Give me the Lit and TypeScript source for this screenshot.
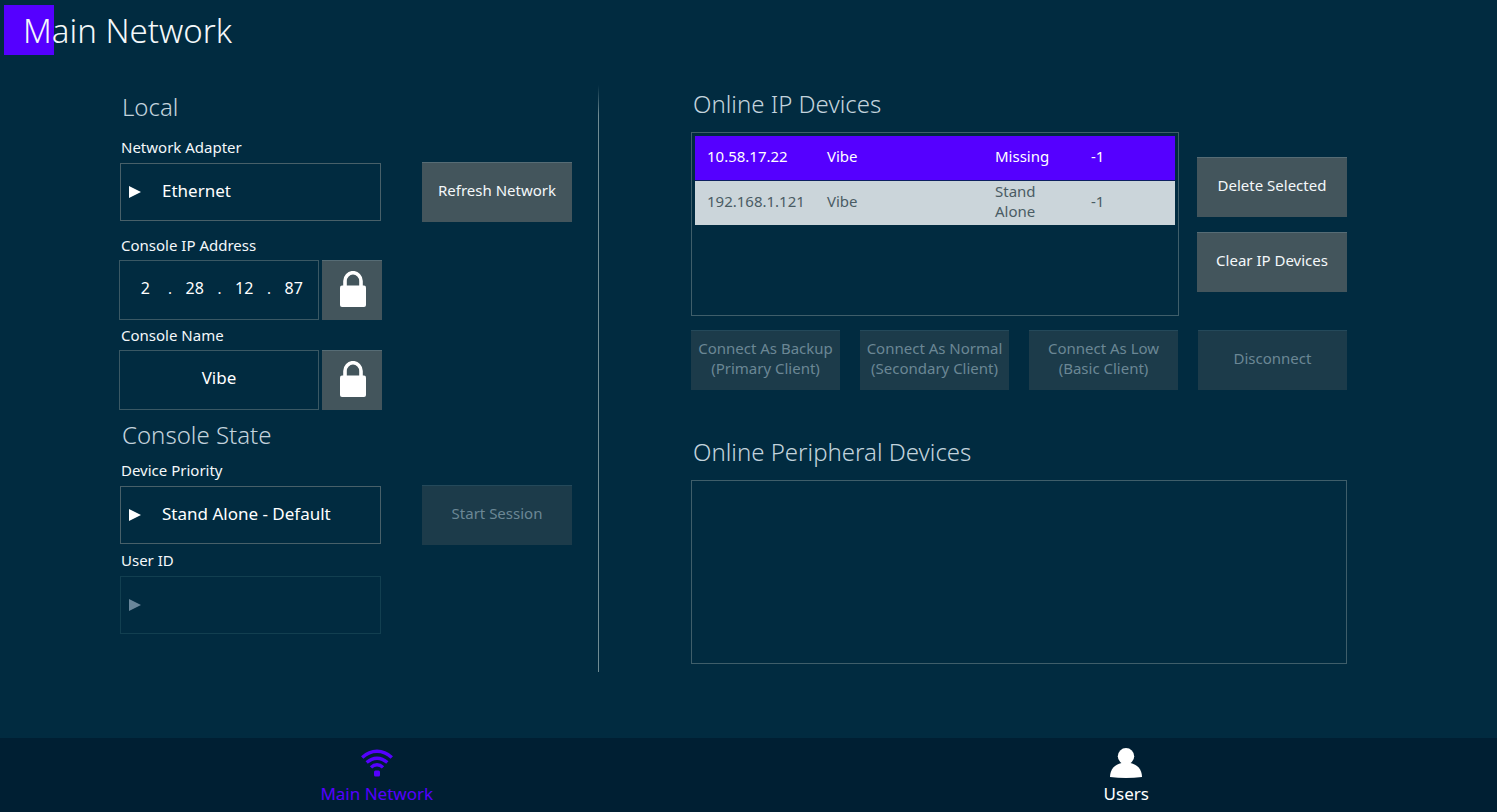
import { LitElement, html, css, svg } from "lit";
import { customElement, property, state } from "lit/decorators.js";
import { classMap } from "lit/directives/class-map.js";

interface Device {
  ip: string;
  name: string;
  status: string;
  id: string;
}

const lockIcon = html`<svg class="lock" viewBox="0 0 26 36" aria-hidden="true">
  <path d="M5 16V10a8 8.300 0 0 1 16 0V16" fill="none" stroke="currentColor" stroke-width="3.6" />
  <rect x="0" y="14.5" width="26" height="21.5" rx="2" fill="currentColor" />
</svg>`;

const wifiIcon = svg`<svg class="nav-icon" viewBox="0 0 32 30" aria-hidden="true">
  <g fill="none" stroke="currentColor" stroke-width="3.4">
    <path d="M1.2 9.4Q8 3.2 16 3.2T30.800 9.400" />
    <path d="M5.700 14.600Q10.500 10.200 16 10.200T26.300 14.600" />
    <path d="M10 19.400Q12.800 16.700 16 16.700T22 19.400" />
  </g>
  <rect x="13" y="22.500" width="6" height="6" rx="1.500" fill="currentColor" />
</svg>`;

const userIcon = svg`<svg class="nav-icon" viewBox="0 0 32 30" aria-hidden="true">
  <circle cx="16" cy="8.200" r="8.200" fill="currentColor" />
  <path d="M0 29C0 21 5 16.500 11.500 15H20.500C27 16.500 32 21 32 29Q16 30.800 0 29Z" fill="currentColor" />
</svg>`;

@customElement("arrow-select")
class ArrowSelect extends LitElement {
  @property() label = "";
  @property() value = "";
  @property({ type: Boolean }) disabled = false;

  static styles = css`
    :host {
      display: block;
    }
    .label {
      display: block;
      height: 26px;
      line-height: 23px;
      padding-left: 1px;
    }
    .box {
      display: grid;
      align-items: center;
      height: 58px;
      margin: 1px 1px 1px 0;
    }
    .control,
    .arrow {
      grid-area: 1 / 1;
    }
    .control {
      box-sizing: border-box;
      width: 100%;
      height: 100%;
      appearance: none;
      border: 1px solid #486069;
      border-radius: 0;
      background: transparent;
      color: #fff;
      font: inherit;
      font-size: 17px;
      padding: 0 8px 2px 41px;
      opacity: 1;
    }
    .arrow {
      width: 12px;
      height: 12px;
      margin-left: 9px;
      pointer-events: none;
      fill: #fff;
    }
    .control:disabled {
      border-color: #123f50;
    }
    .control:disabled + .arrow {
      fill: #69869a;
    }
    option {
      color: #012b40;
    }
  `;

  render() {
    return html`
      <label class="label" for="control">${this.label}</label>
      <div class="box">
        <select class="control" id="control" ?disabled=${this.disabled}>
          <option>${this.value}</option>
        </select>
        <svg class="arrow" viewBox="0 0 12 12" aria-hidden="true"><path d="M0 0L12 6L0 12Z" /></svg>
      </div>
    `;
  }
}

@customElement("app-root")
class AppRoot extends LitElement {
  @state() private selected = 0;

  private octets = ["2", "28", "12", "87"];

  private devices: Device[] = [
    { ip: "10.58.17.22", name: "Vibe", status: "Missing", id: "-1" },
    { ip: "192.168.1.121", name: "Vibe", status: "Stand Alone", id: "-1" },
  ];

  static styles = css`
    :host {
      display: flex;
      flex-direction: column;
      min-height: 100vh;
      background: #012b40;
      color: #f4f8fa;
      font-family: "Noto Sans", "Open Sans", sans-serif;
      font-size: 15px;
      line-height: 20px;
    }
    h1,
    h2 {
      margin: 0;
      font-weight: 300;
    }
    .header {
      padding: 5px 4px 0;
    }
    .title {
      box-sizing: border-box;
      height: 50px;
      font-size: 33px;
      line-height: 48px;
      padding: 2px 0 0 19px;
      background: linear-gradient(#50f, #50f) no-repeat 0 0 / 50px 50px;
    }
    .heading {
      font-size: 24px;
      line-height: 34px;
      padding-left: 2px;
      color: #c3d3dd;
    }
    .main {
      flex: 1;
      display: grid;
      grid-template-columns: minmax(0, 478fr) 1px minmax(0, 748fr);
      align-items: start;
      padding: 30px 150px 66px 120px;
    }
    .local {
      display: grid;
      grid-template-columns: minmax(0, 262fr) minmax(0, 150fr);
      column-gap: 40px;
      align-items: end;
      padding-top: 5px;
      margin-right: 26px;
    }
    .heading.wide {
      grid-column: 1 / -1;
    }
    .local .first {
      margin-bottom: 12px;
    }
    .local .second {
      margin: 8px 0 7px;
    }
    .fields {
      display: flex;
      flex-direction: column;
      gap: 4px;
      margin: 12px 0 0 -1px;
      grid-column: 1;
    }
    .label {
      display: block;
      height: 26px;
      line-height: 23px;
      padding-left: 2px;
    }
    .user {
      margin-top: 4px;
    }
    .row {
      display: flex;
      gap: 3px;
    }
    .box {
      box-sizing: border-box;
      flex: 1;
      min-width: 0;
      height: 60px;
      border: 1px solid #3a5864;
    }
    .ip {
      display: flex;
      align-items: center;
      padding: 0 9px 4px 10px;
    }
    .octet,
    .name {
      min-width: 0;
      background: transparent;
      color: #fff;
      font: inherit;
      text-align: center;
      border-radius: 0;
    }
    .octet {
      flex: 1;
      border: 0;
      padding: 0;
      font-size: 16px;
    }
    .dot {
      width: 19px;
      text-align: center;
    }
    .name {
      font-size: 17px;
      padding: 0 0 5px;
    }
    .button {
      box-sizing: border-box;
      height: 60px;
      padding: 0 0 5px;
      border: 0;
      border-top: 1px solid #566c75;
      background: #43555c;
      color: #f4f8fa;
      font: inherit;
    }
    .button:disabled {
      background: #1c3b4a;
      border-top-color: #24495a;
      color: #6b8795;
    }
    .button.toggle {
      display: grid;
      place-items: center;
      width: 60px;
      padding: 0 0 3px 2px;
      color: #fff;
    }
    .lock {
      width: 26px;
      height: 36px;
    }
    .divider {
      align-self: stretch;
      background: linear-gradient(transparent, #6f8b93 30px);
    }
    .online {
      margin-left: 92px;
      padding-top: 2px;
      display: grid;
      grid-template-columns: repeat(4, minmax(0, 1fr));
      column-gap: 20px;
    }
    .span {
      grid-column: 1 / -1;
    }
    .devices {
      display: flex;
      gap: 18px;
      margin: 11px 0 14px;
    }
    .list {
      box-sizing: border-box;
      height: 184px;
      border: 1px solid #3f5e6a;
    }
    .list.ipdevices {
      flex: 1;
      padding: 3px;
    }
    .side {
      display: flex;
      flex-direction: column;
      gap: 15px;
      width: 150px;
      padding-top: 25px;
    }
    .table {
      width: 100%;
      table-layout: fixed;
      border-collapse: collapse;
    }
    .col-ip {
      width: 25%;
    }
    .col-name {
      width: 35%;
    }
    .col-status,
    .col-id {
      width: 20%;
    }
    .device {
      background: #cbd5da;
      color: #4a5c64;
    }
    .device.selected {
      background: #50f;
      color: #fff;
      border-bottom: 1px solid #0d2060;
    }
    .cell {
      height: 40px;
      padding: 0 12px 4px;
    }
    .peripheral {
      margin: 45px 0 11px;
    }
    .nav {
      display: grid;
      grid-template-columns: 1fr 1fr;
      gap: 8px;
      height: 74px;
      padding-left: 6px;
      background: #001f33;
    }
    .tab {
      display: flex;
      flex-direction: column;
      align-items: center;
      gap: 5px;
      padding-top: 10px;
      box-sizing: border-box;
      color: #fff;
      font-size: 17px;
      line-height: 22px;
      text-decoration: none;
    }
    .tab.active {
      color: #50f;
    }
    .nav-icon {
      width: 32px;
      height: 30px;
    }
  `;

  private field(label: string, id: string, content: unknown) {
    return html`<div>
      <label class="label" for=${id}>${label}</label>
      <div class="row">
        ${content}
        <button class="button toggle" aria-label="Unlock ${label}">${lockIcon}</button>
      </div>
    </div>`;
  }

  render() {
    return html`
      <header class="header"><h1 class="title">Main Network</h1></header>
      <main class="main">
        <section class="local">
          <h2 class="heading wide first">Local</h2>
          <arrow-select label="Network Adapter" value="Ethernet"></arrow-select>
          <button class="button">Refresh Network</button>
          <div class="fields">
            ${this.field(
              "Console IP Address",
              "octet0",
              html`<div class="box ip">
                ${this.octets.map(
                  (octet, i) => html`${i ? html`<span class="dot">.</span>` : ""}<input
                      class="octet"
                      id="octet${i}"
                      aria-label="Octet ${i + 1}"
                      .value=${octet}
                      readonly
                    />`
                )}
              </div>`
            )}
            ${this.field(
              "Console Name",
              "name",
              html`<input class="box name" id="name" .value=${"Vibe"} readonly />`
            )}
          </div>
          <h2 class="heading wide second">Console State</h2>
          <arrow-select label="Device Priority" value="Stand Alone - Default"></arrow-select>
          <button class="button" disabled>Start Session</button>
          <arrow-select class="user" label="User ID" disabled></arrow-select>
        </section>
        <div class="divider"></div>
        <section class="online">
          <h2 class="heading span">Online IP Devices</h2>
          <div class="devices span">
            <div class="list ipdevices">
              <table class="table" aria-label="Online IP Devices">
                <colgroup>
                  <col class="col-ip" />
                  <col class="col-name" />
                  <col class="col-status" />
                  <col class="col-id" />
                </colgroup>
                <tbody>
                  ${this.devices.map(
                    (d, i) => html`<tr
                      class=${classMap({ device: true, selected: i === this.selected })}
                      @click=${() => (this.selected = i)}
                    >
                      <td class="cell">${d.ip}</td>
                      <td class="cell">${d.name}</td>
                      <td class="cell">${d.status}</td>
                      <td class="cell">${d.id}</td>
                    </tr>`
                  )}
                </tbody>
              </table>
            </div>
            <div class="side">
              <button class="button">Delete Selected</button>
              <button class="button">Clear IP Devices</button>
            </div>
          </div>
          <button class="button" disabled>Connect As Backup<br />(Primary Client)</button>
          <button class="button" disabled>Connect As Normal<br />(Secondary Client)</button>
          <button class="button" disabled>Connect As Low<br />(Basic Client)</button>
          <button class="button" disabled>Disconnect</button>
          <h2 class="heading span peripheral">Online Peripheral Devices</h2>
          <div class="list span"></div>
        </section>
      </main>
      <nav class="nav">
        <a class="tab active" href="#network" aria-current="page">${wifiIcon}<span>Main Network</span></a>
        <a class="tab" href="#users">${userIcon}<span>Users</span></a>
      </nav>
    `;
  }
}
